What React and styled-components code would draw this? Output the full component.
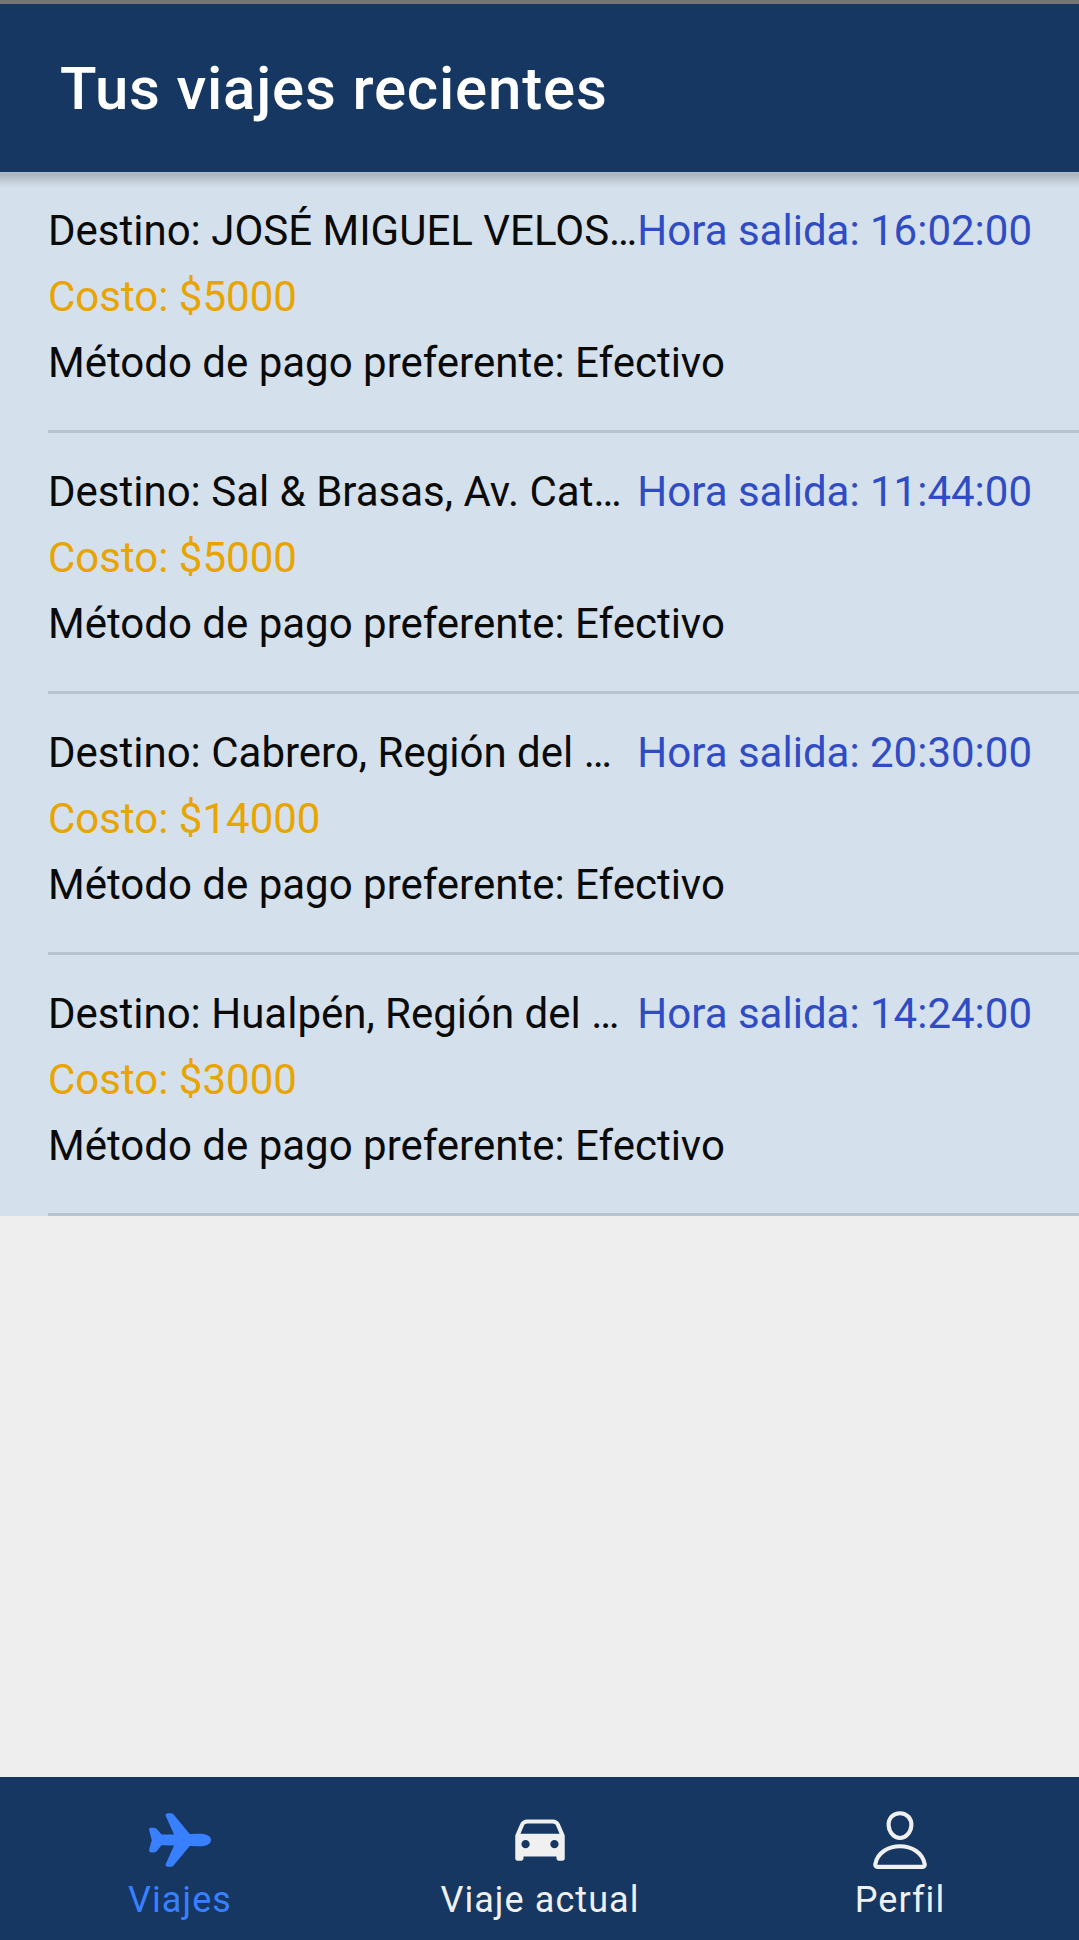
import React from 'react';
import styled, { createGlobalStyle } from 'styled-components';
import { IoAirplane, IoCar, IoPersonOutline } from 'react-icons/io5';

const Global = createGlobalStyle`
  body { margin: 0; background: #eeeeee; font-family: Roboto, sans-serif; }
  * { box-sizing: border-box; }
`;
const Screen = styled.div`
  width: 1079px; height: 1940px; display: flex; flex-direction: column;
  background: #eeeeee; overflow: hidden; border-top: 4px solid #757575;
`;
const Header = styled.header`
  position: relative; height: 168px; flex: none; display: flex; align-items: center; padding: 1px 0 0 60px;
  background: #153761; z-index: 1;
  &::after {
    content: ''; position: absolute; left: 0; right: 0; top: 100%; height: 15px;
    background: linear-gradient(rgba(0,0,0,.15) 0, rgba(0,0,0,.2) 2px, rgba(0,0,0,.12) 7px, rgba(0,0,0,.04) 12px, rgba(0,0,0,.02) 15px);
  }
`;
const Title = styled.h1`
  margin: 0; font-size: 60px; font-weight: 500; letter-spacing: 0.8px; color: #fff; white-space: nowrap;
`;
const List = styled.main`
  flex: 1;
`;
const Trip = styled.section`
  height: 261px; padding-left: 48px; background: #d4e0ec;
`;
const Body = styled.div`
  height: 261px; padding: 26px 47px 0 0; border-bottom: 3px solid #b8c3ce;
`;
const Row = styled.div`
  display: flex; justify-content: space-between;
`;
const Line = styled.div`
  font-size: 42px; line-height: 66px; white-space: nowrap; color: ${p => p.$color || '#0a0a08'};
`;
const Tabs = styled.nav`
  width: 1080px; height: 163px; flex: none; display: flex; background: #153761;
`;
const Tab = styled.div`
  flex: 1; display: flex; flex-direction: column; align-items: center; padding-top: 30px;
  color: ${p => (p.$active ? '#3880ff' : '#f0f0f0')};
  svg { width: 66px; height: 66px; display: block; }
`;
const Label = styled.span`
  font-size: 36px; line-height: 46px; letter-spacing: 1.08px; margin-top: 4px;
`;

const trips = [
  ['JOSÉ MIGUEL VELOS…', '16:02:00', 5000],
  ['Sal & Brasas, Av. Cat…', '11:44:00', 5000],
  ['Cabrero, Región del …', '20:30:00', 14000],
  ['Hualpén, Región del …', '14:24:00', 3000],
];

export default function App() {
  return (
    <Screen>
      <Global />
      <Header><Title>Tus viajes recientes</Title></Header>
      <List>
        {trips.map(([place, time, cost]) => (
          <Trip key={time}><Body>
            <Row><Line>Destino: {place}</Line><Line $color="#304cc4">Hora salida: {time}</Line></Row>
            <Line $color="#e8a400">Costo: ${cost}</Line>
            <Line>Método de pago preferente: Efectivo</Line>
          </Body></Trip>
        ))}
      </List>
      <Tabs>
        <Tab $active><IoAirplane /><Label>Viajes</Label></Tab>
        <Tab><IoCar /><Label>Viaje actual</Label></Tab>
        <Tab><IoPersonOutline /><Label>Perfil</Label></Tab>
      </Tabs>
    </Screen>
  );
}
